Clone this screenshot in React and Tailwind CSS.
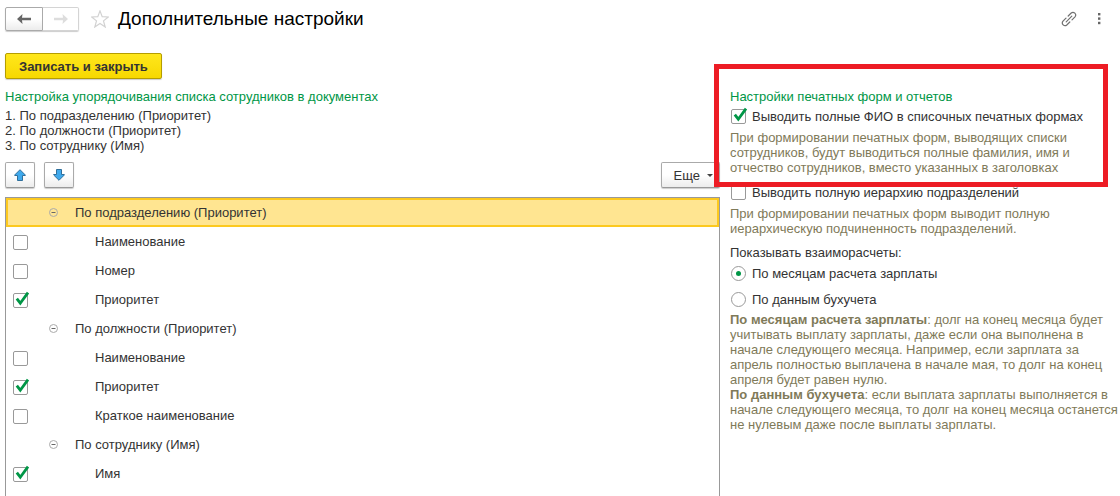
import React, { useState } from 'react'

const initialGroups = [
  {
    id: 'department',
    title: 'По подразделению (Приоритет)',
    items: [
      { id: 'department-name', label: 'Наименование', checked: false },
      { id: 'department-number', label: 'Номер', checked: false },
      { id: 'department-priority', label: 'Приоритет', checked: true },
    ],
  },
  {
    id: 'position',
    title: 'По должности (Приоритет)',
    items: [
      { id: 'position-name', label: 'Наименование', checked: false },
      { id: 'position-priority', label: 'Приоритет', checked: true },
      { id: 'position-short', label: 'Краткое наименование', checked: false },
    ],
  },
  {
    id: 'employee',
    title: 'По сотруднику (Имя)',
    items: [{ id: 'employee-name', label: 'Имя', checked: true }],
  },
]

function Checkbox({ id, checked, onChange }) {
  return (
    <span className="inline-grid h-[15px] w-[15px] shrink-0">
      <input
        id={id}
        type="checkbox"
        checked={checked}
        onChange={onChange}
        className="col-start-1 row-start-1 h-[15px] w-[15px] appearance-none rounded-xs border border-[#999] bg-white"
      />
      {checked && (
        <svg viewBox="0 0 15 15" className="pointer-events-none col-start-1 row-start-1 h-[15px] w-[15px] overflow-visible" fill="none" stroke="#009646" strokeWidth="2.8">
          <path d="M3.8 5.6 L7.3 10.2 L15 -0.4" />
        </svg>
      )}
    </span>
  )
}

function Radio({ id, value, current, onChange, label }) {
  return (
    <div className="flex h-[26px] items-center gap-[6px] pl-px">
      <span className="inline-grid h-[15px] w-[15px] place-items-center">
        <input
          id={id}
          type="radio"
          name="settlements"
          value={value}
          checked={current === value}
          onChange={() => onChange(value)}
          className="col-start-1 row-start-1 h-[15px] w-[15px] appearance-none rounded-full border border-[#999] bg-white"
        />
        {current === value && <span className="pointer-events-none col-start-1 row-start-1 h-[5px] w-[5px] rounded-full bg-[#009646]" />}
      </span>
      <label htmlFor={id}>{label}</label>
    </div>
  )
}

function MoveButton({ label, down }) {
  return (
    <button type="button" aria-label={label} className="flex h-[26px] w-[30px] items-center justify-center rounded-xs border border-[#aaa] border-b-[#999] bg-linear-to-b from-white from-50% to-[#ececec] shadow-[0_1px_1px_#ccc]">
      <svg viewBox="0 0 12 12" className={down ? 'h-3 w-3 rotate-180' : 'h-3 w-3'} fill="#3fa9ec" stroke="#2f6f9b" strokeWidth="1">
        <path d="M6 0.7 L11.3 6 V6.5 H8.5 V11.5 H3.5 V6.5 H0.7 V6 Z" />
      </svg>
    </button>
  )
}

function Header() {
  return (
    <header className="flex h-[38px] items-center pl-[5px]">
      <div className="flex h-6 rounded-xs shadow-[0_1px_1px_#ccc]">
        <button type="button" aria-label="Назад" className="flex w-[38px] items-center justify-center rounded-l-xs border border-[#aaa] bg-linear-to-b from-white from-50% to-[#ececec]">
          <svg viewBox="0 0 14 10" className="h-[10px] w-[14px]" fill="#666">
            <path d="M0 5 L5.5 0 L5 3.8 H14 V6.2 H5 L5.5 10 Z" />
          </svg>
        </button>
        <button type="button" aria-label="Вперед" className="flex w-9 items-center justify-center rounded-r-xs border border-l-0 border-[#d4d4d4] bg-white">
          <svg viewBox="0 0 14 10" className="h-[10px] w-[14px]" fill="#ddd">
            <path d="M14 5 L8.5 0 L9 3.8 H0 V6.2 H9 L8.5 10 Z" />
          </svg>
        </button>
      </div>
      <button type="button" aria-label="В избранное" className="ml-3">
        <svg viewBox="0 0 18 18" className="h-[18px] w-[18px]" fill="none" stroke="#d2d2d2" strokeWidth="1.2">
          <path d="M9 0.9 L11.2 6.6 L17.3 7 L12.5 10.9 L14.2 17 L9 13.5 L3.8 17 L5.5 10.9 L0.7 7 L6.8 6.6 Z" />
        </svg>
      </button>
      <h1 className="ml-[9px] text-[19px] leading-[22px] text-black">Дополнительные настройки</h1>
      <div className="ml-auto flex items-center gap-5 pr-[19px]">
        <button type="button" aria-label="Получить ссылку">
          <svg viewBox="0 0 16 16" className="h-4 w-4" fill="none" stroke="#707070" strokeWidth="1.2" strokeLinecap="round">
            <path d="M5.2 10.8 L10.8 5.2" />
            <path d="M7.2 5 L10.2 2 A2.7 2.7 0 0 1 14 5.8 L11 8.8" />
            <path d="M8.8 11 L5.8 14 A2.7 2.7 0 0 1 2 10.2 L5 7.2" />
          </svg>
        </button>
        <button type="button" aria-label="Еще действия">
          <svg viewBox="0 0 4 12" className="h-3 w-1" fill="#666">
            <rect x="1" y="0" width="2.4" height="2.4" />
            <rect x="1" y="4.4" width="2.4" height="2.4" />
            <rect x="1" y="8.8" width="2.4" height="2.4" />
          </svg>
        </button>
      </div>
    </header>
  )
}

function GroupRows({ group, selected, onSelect, onToggle }) {
  return (
    <>
      <tr onClick={() => onSelect(group.id)} className={selected ? 'h-[29px] bg-[#ffe591] outline-2 -outline-offset-2 outline-[#fcc91f]' : 'h-[29px]'}>
        <td className="w-[37px]" />
        <td>
          <div className="flex items-center pl-[6px]">
            <button type="button" aria-label="Свернуть">
              <svg viewBox="0 0 9 9" className="h-[9px] w-[9px]" fill="none" stroke="#aaa" strokeWidth="1">
                <circle cx="4.5" cy="4.5" r="4" />
                <path d="M2.5 4.5 H6.5" stroke="#666" />
              </svg>
            </button>
            <span className="ml-[17px]">{group.title}</span>
          </div>
        </td>
      </tr>
      {group.items.map((item) => (
        <tr key={item.id} className="h-[29px]">
          <td className="w-[37px] pl-[7px]">
            <div className="flex pt-px">
              <Checkbox id={item.id} checked={item.checked} onChange={() => onToggle(group.id, item.id)} />
            </div>
          </td>
          <td className="pl-[52px]">
            <label htmlFor={item.id}>{item.label}</label>
          </td>
        </tr>
      ))}
    </>
  )
}

export default function App() {
  const [groups, setGroups] = useState(initialGroups)
  const [selected, setSelected] = useState('department')
  const [fullName, setFullName] = useState(true)
  const [fullTree, setFullTree] = useState(false)
  const [settlements, setSettlements] = useState('months')

  const toggleItem = (groupId, itemId) => {
    setGroups(prev => prev.map((group) => {
      if (group.id !== groupId) return group
      return { ...group, items: group.items.map(item => item.id === itemId ? { ...item, checked: !item.checked } : item) }
    }))
  }

  return (
    <div className="flex h-screen flex-col overflow-hidden bg-white font-['Liberation_Sans',Arial,sans-serif] text-[13px] leading-[15px] text-[#333]">
      <Header />

      <div className="px-[5px] pt-[15px]">
        <button type="button" className="h-[26px] rounded-xs border border-[#b59d00] bg-linear-to-b from-[#ffe71a] to-[#f7d800] px-[13px] font-bold shadow-[0_1px_1px_#ccc]">
          Записать и закрыть
        </button>
      </div>

      <div className="flex min-h-0 flex-1 pt-[10px] pl-[5px]">
        <section className="flex min-w-0 flex-1 flex-col">
          <h2 className="text-[#009646]">Настройка упорядочивания списка сотрудников в документах</h2>
          <ol className="mt-1 list-inside list-decimal">
            <li>По подразделению (Приоритет)</li>
            <li>По должности (Приоритет)</li>
            <li>По сотруднику (Имя)</li>
          </ol>

          <div className="mt-[9px] flex">
            <div className="flex gap-[9px]">
              <MoveButton label="Переместить вверх" />
              <MoveButton label="Переместить вниз" down />
            </div>
            <button type="button" className="ml-auto flex h-[26px] items-center gap-[7px] rounded-xs border border-[#aaa] border-b-[#999] bg-linear-to-b from-white from-50% to-[#ececec] pr-[6px] pl-3 shadow-[0_1px_1px_#ccc]">
              Еще
              <svg viewBox="0 0 6 3" className="h-[3px] w-[6px]" fill="#444">
                <path d="M0 0 H6 L3 3 Z" />
              </svg>
            </button>
          </div>

          <div className="mt-[9px] min-h-0 flex-1 overflow-hidden border border-b-0 border-[#999]">
            <table className="w-full border-collapse">
              <tbody>
                {groups.map((group) => (
                  <GroupRows key={group.id} group={group} selected={selected === group.id} onSelect={setSelected} onToggle={toggleItem} />
                ))}
              </tbody>
            </table>
          </div>
        </section>

        <section className="w-[400px] shrink-0 pl-[10px] whitespace-nowrap">
          <div className="relative">
            <h2 className="text-[#009646]">Настройки печатных форм и отчетов</h2>
            <div className="mt-[5px] flex items-center gap-[6px] pl-px">
              <Checkbox id="full-name" checked={fullName} onChange={() => setFullName(!fullName)} />
              <label htmlFor="full-name">Выводить полные ФИО в списочных печатных формах</label>
            </div>
            <p className="mt-[6px] text-[#7f7a59]">
              При формировании печатных форм, выводящих списки<br />
              сотрудников, будут выводиться полные фамилия, имя и<br />
              отчество сотрудников, вместо указанных в заголовках
            </p>
            <div className="pointer-events-none absolute -top-[25px] right-3 -bottom-3 -left-4 border-5 border-[#ed1c24]" />
          </div>

          <div className="mt-[10px] flex items-center gap-[6px] pl-px">
            <Checkbox id="full-tree" checked={fullTree} onChange={() => setFullTree(!fullTree)} />
            <label htmlFor="full-tree">Выводить полную иерархию подразделений</label>
          </div>
          <p className="mt-[6px] text-[#7f7a59]">
            При формировании печатных форм выводит полную<br />
            иерархическую подчиненность подразделений.
          </p>

          <fieldset className="mt-[9px]">
            <legend>Показывать взаиморасчеты:</legend>
            <Radio id="by-months" value="months" current={settlements} onChange={setSettlements} label="По месяцам расчета зарплаты" />
            <Radio id="by-accounting" value="accounting" current={settlements} onChange={setSettlements} label="По данным бухучета" />
          </fieldset>

          <p className="text-[#7f7a59]">
            <b>По месяцам расчета зарплаты</b>: долг на конец месяца будет<br />
            учитывать выплату зарплаты, даже если она выполнена в<br />
            начале следующего месяца. Например, если зарплата за<br />
            апрель полностью выплачена в начале мая, то долг на конец<br />
            апреля будет равен нулю.<br />
            <b>По данным бухучета</b>: если выплата зарплаты выполняется в<br />
            начале следующего месяца, то долг на конец месяца останется<br />
            не нулевым даже после выплаты зарплаты.
          </p>
        </section>
      </div>
    </div>
  )
}
